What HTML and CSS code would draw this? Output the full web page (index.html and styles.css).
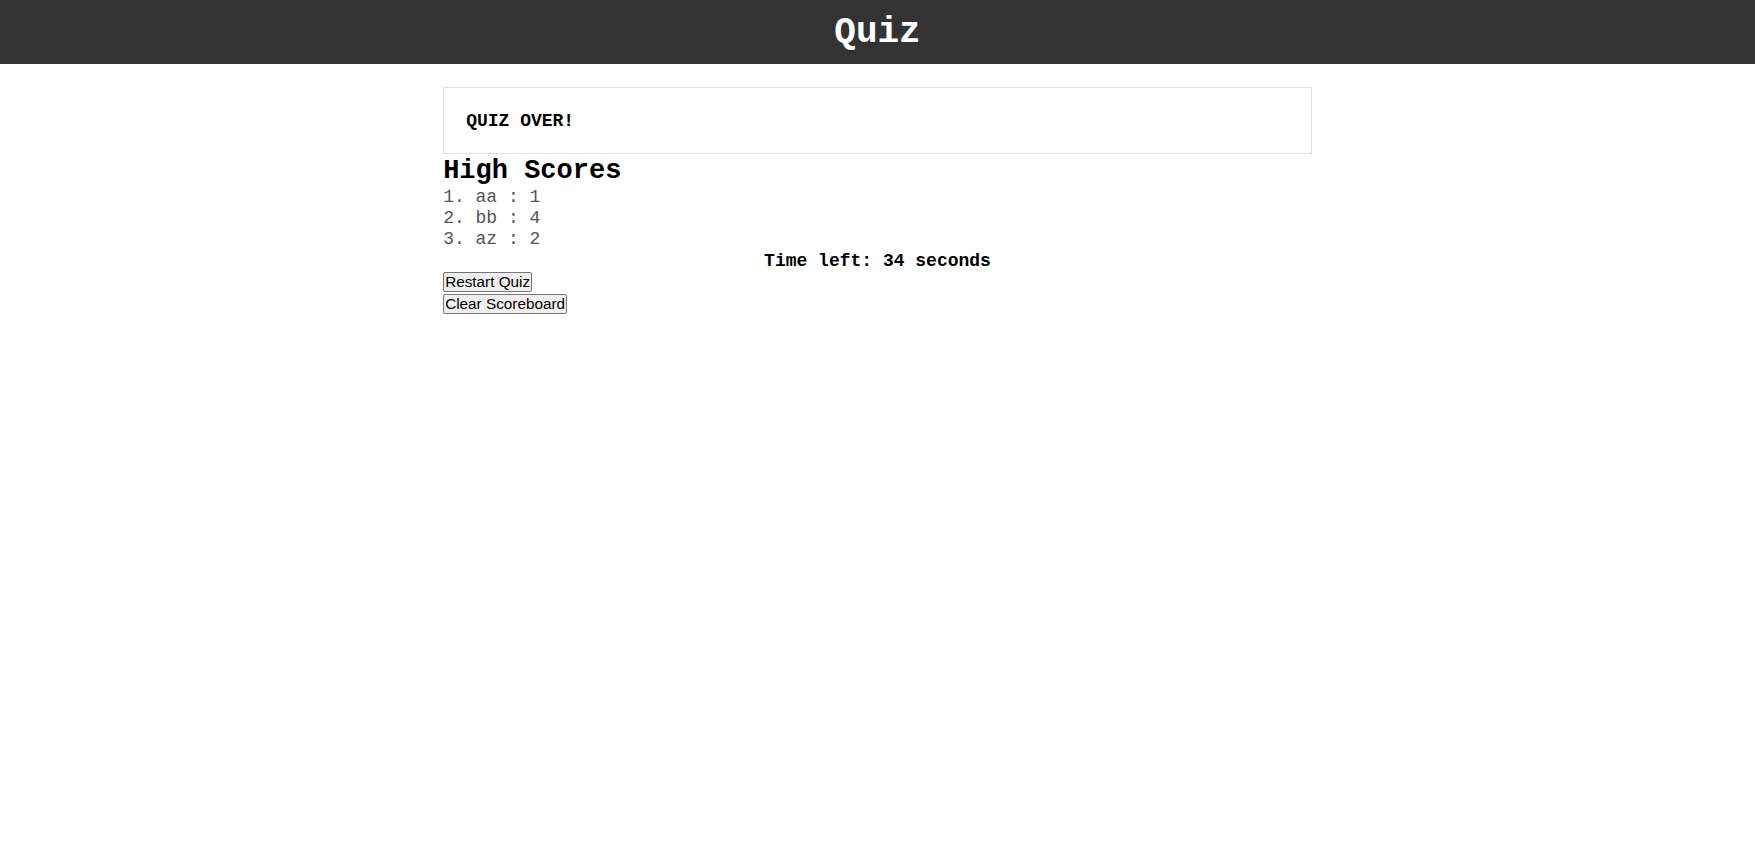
FILE: index.html
```html
<!DOCTYPE html>
<html lang="en">
<head>
<meta charset="utf-8">
<title>Quiz</title>
<link rel="stylesheet" href="styles.css">
</head>
<body>
<header class="topbar">
  <h1 class="title">Quiz</h1>
</header>
<main class="container">
  <div class="card">
    <p class="card-text">QUIZ OVER!</p>
  </div>
  <h2 class="scores-title">High Scores</h2>
  <ol class="scores">
    <li>1. aa : 1</li>
    <li>2. bb : 4</li>
    <li>3. az : 2</li>
  </ol>
  <p class="timer">Time left: 34 seconds</p>
  <div class="actions">
    <button class="btn" type="button">Restart Quiz</button>
    <button class="btn" type="button">Clear Scoreboard</button>
  </div>
</main>
</body>
</html>
```

FILE: styles.css
```css
html, body {
  margin: 0;
  padding: 0;
  background: #fff;
}

body {
  font-family: "Liberation Mono", "Courier New", monospace;
  font-size: 18px;
  color: #000;
}

.topbar {
  background: #333333;
  height: 64px;
  display: flex;
  align-items: center;
  justify-content: center;
}

.title {
  margin: 0;
  color: #fff;
  font-size: 36px;
  font-weight: bold;
  line-height: 1;
  padding-top: 2px;
}

.container {
  width: 49.5%;
  margin: 23px auto 0;
}

.card {
  border: 1px solid #dddddd;
  padding: 23px 22px 21px;
}

.card-text {
  margin: 0;
  font-weight: bold;
  font-size: 18px;
  line-height: 21px;
}

.scores-title {
  margin: 0;
  padding-top: 2px;
  font-size: 27px;
  line-height: 31px;
  font-weight: bold;
}

.scores {
  list-style: none;
  margin: 0;
  padding: 0;
  color: #555;
  font-size: 18px;
  line-height: 21px;
}

.timer {
  margin: 0;
  padding-top: 1px;
  text-align: center;
  font-weight: bold;
  font-size: 18px;
  line-height: 21px;
}

.actions {
  display: flex;
  flex-direction: column;
  align-items: flex-start;
  gap: 2px;
  margin-top: 0;
}

.btn {
  font-family: "Liberation Sans", Arial, sans-serif;
  font-size: 15.3px;
  line-height: 16px;
  color: #000;
  background: #efefef;
  border: 1px solid #767676;
  border-radius: 2px;
  padding: 1px 1px;
  margin: 0;
}
```
